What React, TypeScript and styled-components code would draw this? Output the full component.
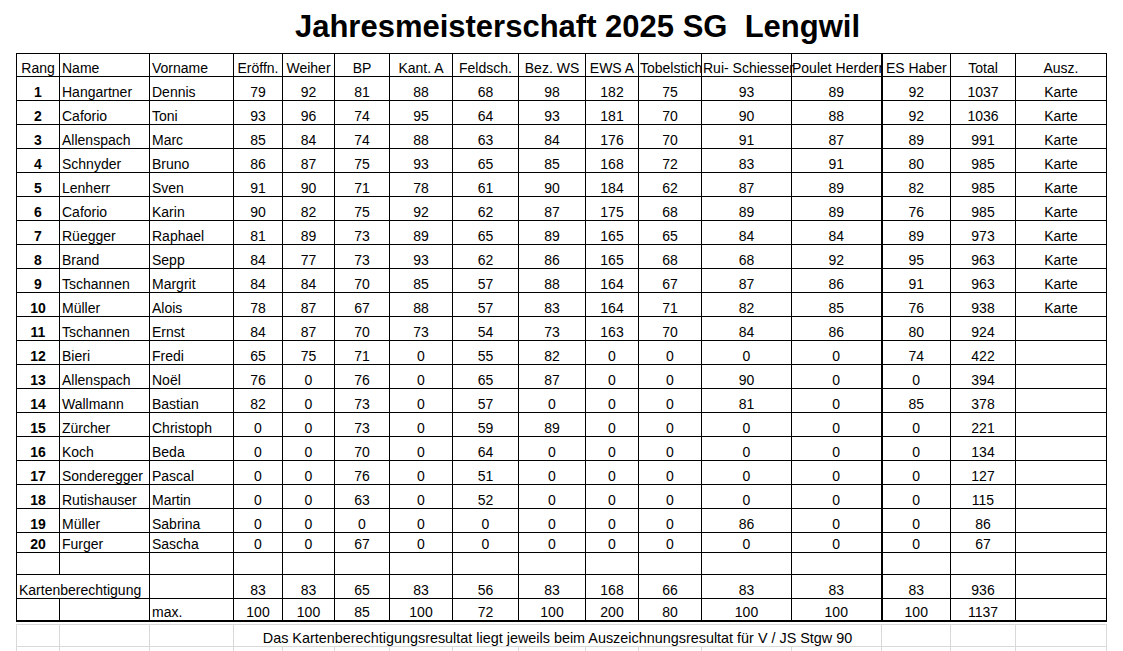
import React from 'react'
import styled, { createGlobalStyle } from 'styled-components'

const GlobalStyle = createGlobalStyle`
  html, body {
    margin: 0;
    padding: 0;
    background: #fff;
  }
  body {
    font-family: "Liberation Sans", Arial, sans-serif;
    color: #000;
  }
`

const widths = [43, 90, 84, 49, 52, 55, 63, 66, 67, 53, 63, 90, 90, 69, 65, 91]
const sheetWidth = widths.reduce((a, b) => a + b, 0) + 1
const THICK_COL = 13 // ES Haber has a heavy line on its left

type Align = 'left' | 'center'

const Page = styled.div`
  width: 1123px;
  height: 651px;
  overflow: hidden;
  background: #fff;
`

const Title = styled.h1`
  margin: 0;
  height: 53px;
  box-sizing: border-box;
  padding: 9px 0 0 32px;
  font-size: 31px;
  line-height: 36px;
  font-weight: bold;
  text-align: center;
  white-space: pre;
`

const Sheet = styled.table`
  margin-left: 16px;
  width: ${sheetWidth}px;
  border-collapse: collapse;
  table-layout: fixed;
  font-size: 14px;
`

const Col = styled.col<{ $w: number }>`
  width: ${p => p.$w}px;
`

const Row = styled.tr<{ $h: number }>`
  height: ${p => p.$h}px;
`

const Cell = styled.td<{ $align?: Align; $bold?: boolean; $thick?: boolean; $last?: boolean; $spill?: boolean }>`
  border: 1px solid #000;
  border-left-width: ${p => (p.$thick ? '2px' : '1px')};
  border-bottom-width: ${p => (p.$last ? '2px' : '1px')};
  padding: 0 2px;
  vertical-align: bottom;
  text-align: ${p => p.$align ?? 'center'};
  font-weight: ${p => (p.$bold ? 'bold' : 'normal')};
  line-height: 16px;
  white-space: nowrap;
  overflow: ${p => (p.$spill ? 'visible' : 'hidden')};
`

const HeadCell = styled(Cell).attrs({ as: 'th' })<{ $pad?: number }>`
  padding-left: ${p => p.$pad ?? 2}px;
  padding-right: ${p => p.$pad ?? 2}px;
`

const Footer = styled.table`
  margin: 2px 0 0 16px;
  width: ${sheetWidth}px;
  border-collapse: collapse;
  table-layout: fixed;
  font-size: 14.4px;
`

const GridCell = styled.td`
  border: 1px solid #d9d9d9;
  padding: 0 2px;
  line-height: 16px;
  vertical-align: bottom;
  text-align: center;
  white-space: nowrap;
  overflow: hidden;
`

type Entry = {
  rank: number
  name: string
  first: string
  scores: number[]
  total: number
  award?: string
}

const entries: Entry[] = [
  { rank: 1, name: 'Hangartner', first: 'Dennis', scores: [79, 92, 81, 88, 68, 98, 182, 75, 93, 89, 92], total: 1037, award: 'Karte' },
  { rank: 2, name: 'Caforio', first: 'Toni', scores: [93, 96, 74, 95, 64, 93, 181, 70, 90, 88, 92], total: 1036, award: 'Karte' },
  { rank: 3, name: 'Allenspach', first: 'Marc', scores: [85, 84, 74, 88, 63, 84, 176, 70, 91, 87, 89], total: 991, award: 'Karte' },
  { rank: 4, name: 'Schnyder', first: 'Bruno', scores: [86, 87, 75, 93, 65, 85, 168, 72, 83, 91, 80], total: 985, award: 'Karte' },
  { rank: 5, name: 'Lenherr', first: 'Sven', scores: [91, 90, 71, 78, 61, 90, 184, 62, 87, 89, 82], total: 985, award: 'Karte' },
  { rank: 6, name: 'Caforio', first: 'Karin', scores: [90, 82, 75, 92, 62, 87, 175, 68, 89, 89, 76], total: 985, award: 'Karte' },
  { rank: 7, name: 'Rüegger', first: 'Raphael', scores: [81, 89, 73, 89, 65, 89, 165, 65, 84, 84, 89], total: 973, award: 'Karte' },
  { rank: 8, name: 'Brand', first: 'Sepp', scores: [84, 77, 73, 93, 62, 86, 165, 68, 68, 92, 95], total: 963, award: 'Karte' },
  { rank: 9, name: 'Tschannen', first: 'Margrit', scores: [84, 84, 70, 85, 57, 88, 164, 67, 87, 86, 91], total: 963, award: 'Karte' },
  { rank: 10, name: 'Müller', first: 'Alois', scores: [78, 87, 67, 88, 57, 83, 164, 71, 82, 85, 76], total: 938, award: 'Karte' },
  { rank: 11, name: 'Tschannen', first: 'Ernst', scores: [84, 87, 70, 73, 54, 73, 163, 70, 84, 86, 80], total: 924 },
  { rank: 12, name: 'Bieri', first: 'Fredi', scores: [65, 75, 71, 0, 55, 82, 0, 0, 0, 0, 74], total: 422 },
  { rank: 13, name: 'Allenspach', first: 'Noël', scores: [76, 0, 76, 0, 65, 87, 0, 0, 90, 0, 0], total: 394 },
  { rank: 14, name: 'Wallmann', first: 'Bastian', scores: [82, 0, 73, 0, 57, 0, 0, 0, 81, 0, 85], total: 378 },
  { rank: 15, name: 'Zürcher', first: 'Christoph', scores: [0, 0, 73, 0, 59, 89, 0, 0, 0, 0, 0], total: 221 },
  { rank: 16, name: 'Koch', first: 'Beda', scores: [0, 0, 70, 0, 64, 0, 0, 0, 0, 0, 0], total: 134 },
  { rank: 17, name: 'Sonderegger', first: 'Pascal', scores: [0, 0, 76, 0, 51, 0, 0, 0, 0, 0, 0], total: 127 },
  { rank: 18, name: 'Rutishauser', first: 'Martin', scores: [0, 0, 63, 0, 52, 0, 0, 0, 0, 0, 0], total: 115 },
  { rank: 19, name: 'Müller', first: 'Sabrina', scores: [0, 0, 0, 0, 0, 0, 0, 0, 86, 0, 0], total: 86 },
  { rank: 20, name: 'Furger', first: 'Sascha', scores: [0, 0, 67, 0, 0, 0, 0, 0, 0, 0, 0], total: 67 },
]

const cardLimit = [83, 83, 65, 83, 56, 83, 168, 66, 83, 83, 83]
const maxPoints = [100, 100, 85, 100, 72, 100, 200, 80, 100, 100, 100]

const ColGroup = () => (
  <colgroup>
    {widths.map((w, i) => (
      <Col key={i} $w={w} />
    ))}
  </colgroup>
)

const Scores = ({ values, last }: { values: (number | string)[]; last?: boolean }) => (
  <>
    {values.map((v, i) => (
      <Cell key={i} $thick={i + 3 === THICK_COL} $last={last}>
        {v}
      </Cell>
    ))}
  </>
)

export default function App() {
  return (
    <Page>
      <GlobalStyle />
      <Title>Jahresmeisterschaft 2025 SG  Lengwil</Title>
      <Sheet>
        <ColGroup />
        <thead>
          <Row $h={23}>
            <HeadCell>Rang</HeadCell>
            <HeadCell $align="left">Name</HeadCell>
            <HeadCell $align="left">Vorname</HeadCell>
            <HeadCell $pad={0}>Eröffn.</HeadCell>
            <HeadCell>Weiher</HeadCell>
            <HeadCell>BP</HeadCell>
            <HeadCell>Kant. A</HeadCell>
            <HeadCell>Feldsch.</HeadCell>
            <HeadCell>Bez. WS</HeadCell>
            <HeadCell>EWS A</HeadCell>
            <HeadCell $align="left" $pad={1} $spill>Tobelstich</HeadCell>
            <HeadCell $align="left" $pad={1} $spill>Rui- Schiesser</HeadCell>
            <HeadCell $align="left" $pad={0}>Poulet Herdern</HeadCell>
            <HeadCell $thick>ES Haber</HeadCell>
            <HeadCell>Total</HeadCell>
            <HeadCell>Ausz.</HeadCell>
          </Row>
        </thead>
        <tbody>
          {entries.map(e => (
            <Row key={e.rank} $h={e.rank === 20 ? 20 : 24}>
              <Cell $bold>{e.rank}</Cell>
              <Cell $align="left">{e.name}</Cell>
              <Cell $align="left">{e.first}</Cell>
              <Scores values={e.scores} />
              <Cell>{e.total}</Cell>
              <Cell>{e.award ?? ''}</Cell>
            </Row>
          ))}
          <Row $h={22}>
            <Cell />
            <Cell />
            <Cell />
            <Scores values={Array(11).fill('')} />
            <Cell />
            <Cell />
          </Row>
          <Row $h={24}>
            <Cell colSpan={2} $align="left" $spill>Kartenberechtigung</Cell>
            <Cell />
            <Scores values={cardLimit} />
            <Cell>936</Cell>
            <Cell />
          </Row>
          <Row $h={22}>
            <Cell $last />
            <Cell $last />
            <Cell $align="left" $last>max.</Cell>
            <Scores values={maxPoints} last />
            <Cell $last>1137</Cell>
            <Cell $last />
          </Row>
        </tbody>
      </Sheet>
      <Footer>
        <ColGroup />
        <tbody>
          <Row $h={22}>
            <GridCell />
            <GridCell />
            <GridCell />
            <GridCell colSpan={10}>
              Das Kartenberechtigungsresultat liegt jeweils beim Auszeichnungsresultat für V / JS Stgw 90
            </GridCell>
            <GridCell />
            <GridCell />
            <GridCell />
          </Row>
          <Row $h={22}>
            {widths.map((_, i) => (
              <GridCell key={i} />
            ))}
          </Row>
        </tbody>
      </Footer>
    </Page>
  )
}
